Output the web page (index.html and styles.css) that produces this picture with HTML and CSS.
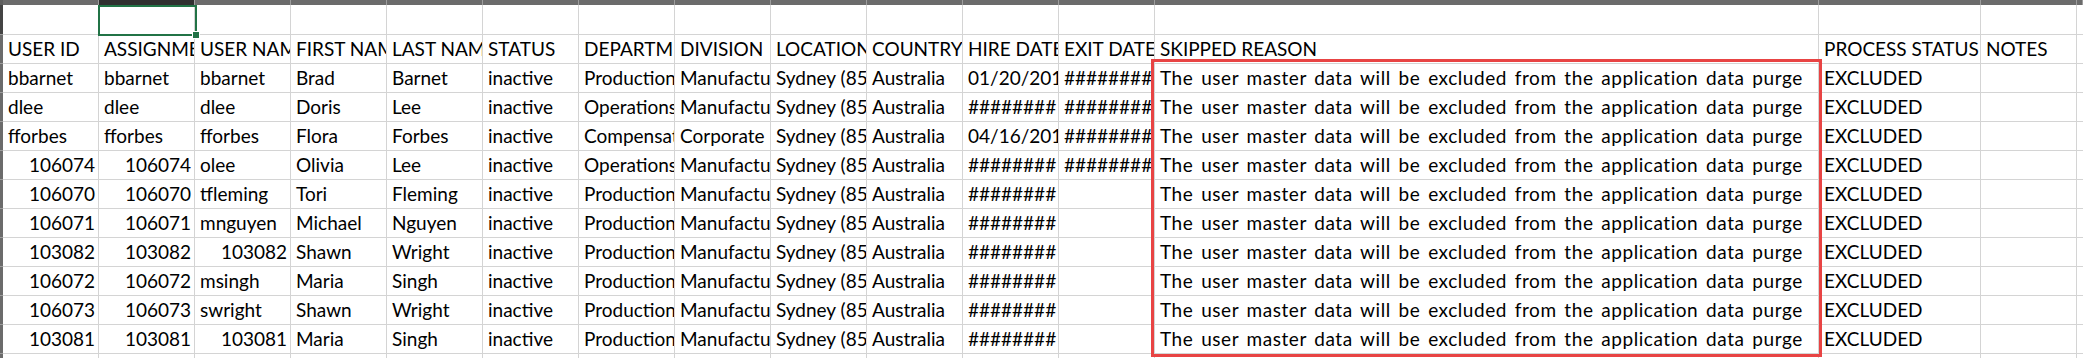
FILE: index.html
```html
<!DOCTYPE html>
<html lang="en">
<head>
<meta charset="utf-8">
<title>Sheet</title>
<link rel="stylesheet" href="styles.css">
</head>
<body>
<div class="sheet">
  <div class="band">
    <div class="bh"></div><div class="bh"></div><div class="bh sel"></div><div class="bh"></div><div class="bh"></div><div class="bh"></div><div class="bh"></div><div class="bh"></div><div class="bh"></div><div class="bh"></div><div class="bh"></div><div class="bh"></div><div class="bh"></div><div class="bh"></div><div class="bh"></div><div class="bh"></div><div class="bh"></div>
  </div>
  <div class="row first">
    <div class="rh sel"></div><div class="c"></div><div class="c"></div><div class="c"></div><div class="c"></div><div class="c"></div><div class="c"></div><div class="c"></div><div class="c"></div><div class="c"></div><div class="c"></div><div class="c"></div><div class="c"></div><div class="c"></div><div class="c"></div><div class="c"></div><div class="c"></div>
  </div>
  <div class="row">
    <div class="rh"></div><div class="c">USER ID</div><div class="c">ASSIGNMENT ID</div><div class="c">USER NAME</div><div class="c">FIRST NAME</div><div class="c">LAST NAME</div><div class="c">STATUS</div><div class="c">DEPARTMENT</div><div class="c">DIVISION</div><div class="c">LOCATION</div><div class="c">COUNTRY</div><div class="c">HIRE DATE</div><div class="c">EXIT DATE</div><div class="c">SKIPPED REASON</div><div class="c">PROCESS STATUS</div><div class="c">NOTES</div><div class="c"></div>
  </div>
  <div class="row">
    <div class="rh"></div><div class="c">bbarnet</div><div class="c">bbarnet</div><div class="c">bbarnet</div><div class="c">Brad</div><div class="c">Barnet</div><div class="c">inactive</div><div class="c">Production</div><div class="c">Manufacturing</div><div class="c">Sydney (850)</div><div class="c">Australia</div><div class="c">01/20/2018</div><div class="c">##########</div><div class="c reason">The user master data will be excluded from the application data purge</div><div class="c">EXCLUDED</div><div class="c"></div><div class="c"></div>
  </div>
  <div class="row">
    <div class="rh"></div><div class="c">dlee</div><div class="c">dlee</div><div class="c">dlee</div><div class="c">Doris</div><div class="c">Lee</div><div class="c">inactive</div><div class="c">Operations</div><div class="c">Manufacturing</div><div class="c">Sydney (850)</div><div class="c">Australia</div><div class="c">########</div><div class="c">##########</div><div class="c reason">The user master data will be excluded from the application data purge</div><div class="c">EXCLUDED</div><div class="c"></div><div class="c"></div>
  </div>
  <div class="row">
    <div class="rh"></div><div class="c">fforbes</div><div class="c">fforbes</div><div class="c">fforbes</div><div class="c">Flora</div><div class="c">Forbes</div><div class="c">inactive</div><div class="c">Compensation</div><div class="c">Corporate</div><div class="c">Sydney (850)</div><div class="c">Australia</div><div class="c">04/16/2019</div><div class="c">##########</div><div class="c reason">The user master data will be excluded from the application data purge</div><div class="c">EXCLUDED</div><div class="c"></div><div class="c"></div>
  </div>
  <div class="row">
    <div class="rh"></div><div class="c n">106074</div><div class="c n">106074</div><div class="c">olee</div><div class="c">Olivia</div><div class="c">Lee</div><div class="c">inactive</div><div class="c">Operations</div><div class="c">Manufacturing</div><div class="c">Sydney (850)</div><div class="c">Australia</div><div class="c">########</div><div class="c">##########</div><div class="c reason">The user master data will be excluded from the application data purge</div><div class="c">EXCLUDED</div><div class="c"></div><div class="c"></div>
  </div>
  <div class="row">
    <div class="rh"></div><div class="c n">106070</div><div class="c n">106070</div><div class="c">tfleming</div><div class="c">Tori</div><div class="c">Fleming</div><div class="c">inactive</div><div class="c">Production</div><div class="c">Manufacturing</div><div class="c">Sydney (850)</div><div class="c">Australia</div><div class="c">########</div><div class="c"></div><div class="c reason">The user master data will be excluded from the application data purge</div><div class="c">EXCLUDED</div><div class="c"></div><div class="c"></div>
  </div>
  <div class="row">
    <div class="rh"></div><div class="c n">106071</div><div class="c n">106071</div><div class="c">mnguyen</div><div class="c">Michael</div><div class="c">Nguyen</div><div class="c">inactive</div><div class="c">Production</div><div class="c">Manufacturing</div><div class="c">Sydney (850)</div><div class="c">Australia</div><div class="c">########</div><div class="c"></div><div class="c reason">The user master data will be excluded from the application data purge</div><div class="c">EXCLUDED</div><div class="c"></div><div class="c"></div>
  </div>
  <div class="row">
    <div class="rh"></div><div class="c n">103082</div><div class="c n">103082</div><div class="c n">103082</div><div class="c">Shawn</div><div class="c">Wright</div><div class="c">inactive</div><div class="c">Production</div><div class="c">Manufacturing</div><div class="c">Sydney (850)</div><div class="c">Australia</div><div class="c">########</div><div class="c"></div><div class="c reason">The user master data will be excluded from the application data purge</div><div class="c">EXCLUDED</div><div class="c"></div><div class="c"></div>
  </div>
  <div class="row">
    <div class="rh"></div><div class="c n">106072</div><div class="c n">106072</div><div class="c">msingh</div><div class="c">Maria</div><div class="c">Singh</div><div class="c">inactive</div><div class="c">Production</div><div class="c">Manufacturing</div><div class="c">Sydney (850)</div><div class="c">Australia</div><div class="c">########</div><div class="c"></div><div class="c reason">The user master data will be excluded from the application data purge</div><div class="c">EXCLUDED</div><div class="c"></div><div class="c"></div>
  </div>
  <div class="row">
    <div class="rh"></div><div class="c n">106073</div><div class="c n">106073</div><div class="c">swright</div><div class="c">Shawn</div><div class="c">Wright</div><div class="c">inactive</div><div class="c">Production</div><div class="c">Manufacturing</div><div class="c">Sydney (850)</div><div class="c">Australia</div><div class="c">########</div><div class="c"></div><div class="c reason">The user master data will be excluded from the application data purge</div><div class="c">EXCLUDED</div><div class="c"></div><div class="c"></div>
  </div>
  <div class="row">
    <div class="rh"></div><div class="c n">103081</div><div class="c n">103081</div><div class="c n">103081</div><div class="c">Maria</div><div class="c">Singh</div><div class="c">inactive</div><div class="c">Production</div><div class="c">Manufacturing</div><div class="c">Sydney (850)</div><div class="c">Australia</div><div class="c">########</div><div class="c"></div><div class="c reason">The user master data will be excluded from the application data purge</div><div class="c">EXCLUDED</div><div class="c"></div><div class="c"></div>
  </div>
  <div class="row last">
    <div class="rh"></div><div class="c"></div><div class="c"></div><div class="c"></div><div class="c"></div><div class="c"></div><div class="c"></div><div class="c"></div><div class="c"></div><div class="c"></div><div class="c"></div><div class="c"></div><div class="c"></div><div class="c"></div><div class="c"></div><div class="c"></div><div class="c"></div>
  </div>

  <div class="selection"><span class="handle"></span></div>
  <div class="annotation"></div>
</div>
</body>
</html>
```

FILE: styles.css
```css
html, body {
  margin: 0;
  padding: 0;
  background: #ffffff;
}

body {
  width: 2083px;
  height: 358px;
  overflow: hidden;
  font-family: "Lato", "Liberation Sans", sans-serif;
  font-size: 19px;
  color: #000000;
}

.sheet {
  position: relative;
  width: 2083px;
  height: 358px;
  overflow: hidden;
}

.band,
.row {
  display: grid;
  grid-template-columns: 3px 96px repeat(11, 96px) 664px 162px 96px 1fr;
}

.band {
  height: 5px;
}

.bh {
  background: #6b6b6b;
  border-right: 1px solid #9c9c9c;
}

.bh:first-child {
  background: #5e5e5e;
  border-right: none;
}

.bh.sel {
  background: #2f2f2f;
}

.row {
  height: 29px;
}

.row.first {
  height: 30px;
}

.row.last {
  height: 5px;
}

.rh {
  background: #6b6b6b;
  border-bottom: 1px solid #9c9c9c;
}

.rh.sel {
  background: #444444;
}

.c {
  box-sizing: border-box;
  border-right: 1px solid #d4d4d4;
  border-bottom: 1px solid #d4d4d4;
  padding: 0 3px 0 5px;
  line-height: 28px;
  white-space: nowrap;
  overflow: hidden;
}

.row.last .c {
  border-bottom: none;
}

.c.n {
  text-align: right;
}

.c.reason {
  letter-spacing: 0.55px;
  word-spacing: 2.4px;
}

.selection {
  position: absolute;
  left: 98px;
  top: 5px;
  width: 99px;
  height: 31px;
  box-sizing: border-box;
  border: 2px solid #217346;
}

.handle {
  position: absolute;
  right: -5px;
  bottom: -5px;
  width: 6px;
  height: 6px;
  background: #217346;
  border: 1px solid #ffffff;
}

.annotation {
  position: absolute;
  left: 1151px;
  top: 59px;
  width: 671px;
  height: 298px;
  box-sizing: border-box;
  border: 3px solid #e84444;
}
```
